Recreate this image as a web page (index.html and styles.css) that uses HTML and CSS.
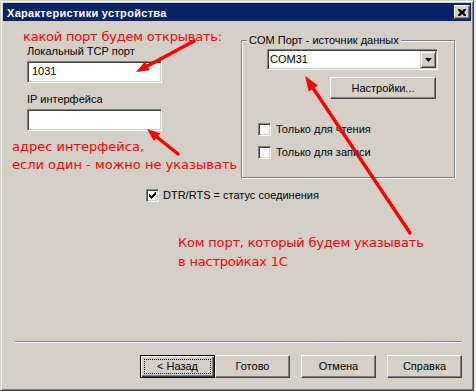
FILE: index.html
```html
<!DOCTYPE html>
<html lang="ru">
<head>
    <meta charset="UTF-8">
    <title>Характеристики устройства</title>
    <link rel="stylesheet" href="styles.css">
</head>
<body>
    <div class="window">
        <div class="titlebar">
            <span class="title">Характеристики устройства</span>
            <span class="close raised">
                <svg width="8" height="7" viewBox="0 0 8 7"><path d="M0 0h2l2 2 2-2h2v1l-2 2.5 2 2.5v1h-2l-2-2-2 2h-2v-1l2-2.5-2-2.5z" fill="#000"/></svg>
            </span>
        </div>
        <div class="content">
            <div class="top">
                <div class="left">
                    <div class="note note-port">какой порт будем открывать:</div>
                    <div class="label">Локальный TCP порт</div>
                    <div class="edit">1031</div>
                    <div class="label label-ip">IP интерфейса</div>
                    <div class="edit"></div>
                    <div class="note note-ip">адрес интерфейса,<br>если один - можно не указывать</div>
                </div>
                <div class="group">
                    <div class="legend">COM Порт - источник данных</div>
                    <div class="combo">
                        <span class="combo-text">COM31</span>
                        <span class="combo-btn">
                            <svg width="7" height="4" viewBox="0 0 7 4"><path d="M0 0h7l-3.5 4z" fill="#000"/></svg>
                        </span>
                    </div>
                    <div class="btn btn-settings">Настройки...</div>
                    <div class="check check-read"><span class="box"></span>Только для чтения</div>
                    <div class="check check-write"><span class="box"></span>Только для записи</div>
                </div>
            </div>
            <div class="check check-dtr">
                <span class="box">
                    <svg width="7" height="7" viewBox="0 0 7 7"><path d="M6 0h1v3h-1v1h-1v1h-1v1h-1v1h-1v-1h-1v-1h-1v-3h1v1h1v1h1v-1h1v-1h1z" fill="#000"/></svg>
                </span>DTR/RTS = статус соединения
            </div>
            <div class="note note-com">Ком порт, который будем указывать<br>в настройках 1С</div>
            <div class="separator"></div>
            <div class="buttons">
                <div class="btn btn-default"><span class="focus">&lt; Назад</span></div>
                <div class="btn">Готово</div>
                <div class="btn btn-gap">Отмена</div>
                <div class="btn btn-gap">Справка</div>
            </div>
        </div>
        <svg class="arrows" width="474" height="391" viewBox="0 0 474 391">
            <g stroke="#f00" stroke-width="3.4" stroke-linecap="round">
                <line x1="193" y1="40" x2="146.5" y2="64.9"/>
                <line x1="177" y1="153" x2="156.1" y2="136.2"/>
                <line x1="409" y1="232" x2="312.3" y2="87.5"/>
            </g>
            <g fill="#f00">
                <polygon points="135,71 148.8,69.3 144.1,60.5"/>
                <polygon points="146,128 153,140.1 159.2,132.3"/>
                <polygon points="304,75 307.8,90.5 316.9,84.4"/>
            </g>
        </svg>
    </div>
</body>
</html>
```

FILE: styles.css
```css
body { margin: 0; background: #eceae6; font-family: "Liberation Sans", Arial, sans-serif; font-size: 11px; line-height: 13px; color: #000; }

.window { position: relative; width: 474px; height: 391px; box-sizing: border-box; display: flex; flex-direction: column; padding: 2px; background: #d4d0c8; border: 1px solid; border-color: #d4d0c8 #404040 #404040 #d4d0c8; box-shadow: inset 1px 1px #fff, inset -1px -1px #808080; }

.titlebar { flex: none; height: 18px; display: flex; justify-content: space-between; align-items: flex-start; background: #0a246a; }
.title { padding: 4px 0 0 4px; color: #fff; font-weight: bold; letter-spacing: 0.3px; }
.close { width: 16px; height: 14px; margin: 2px 1px 0 0; display: flex; align-items: center; justify-content: center; }

.raised { box-sizing: border-box; background: #d4d0c8; border: 1px solid; border-color: #fff #404040 #404040 #fff; box-shadow: inset -1px -1px #808080; }

.content { flex: 1; display: flex; flex-direction: column; padding-bottom: 10px; }
.top { display: flex; align-items: flex-start; }
.left { flex: none; width: 238px; }

.note { color: #f00; font-family: "DejaVu Sans", sans-serif; font-size: 13px; white-space: nowrap; }
.note-port { margin: 8px 0 0 20px; line-height: 16px; letter-spacing: -0.2px; }
.note-ip { margin: 7px 0 0 9px; line-height: 18px; }
.note-com { margin: 31px 0 0 175px; line-height: 19px; letter-spacing: -0.2px; }

.label { margin-left: 24px; }
.label-ip { margin-top: 10px; }
.edit { width: 135px; height: 22px; margin: 3px 0 0 24px; padding: 0 4px; line-height: 18px; background: #fff; box-sizing: border-box; border: 1px solid; border-color: #808080 #fff #fff #808080; box-shadow: inset 1px 1px #404040, inset -1px -1px #d4d0c8; }

.group { width: 214px; margin-top: 19px; padding-bottom: 18px; box-sizing: border-box; border: 1px solid #808080; box-shadow: inset 1px 1px #fff, 1px 1px #fff; }
.legend { display: table; margin: -7px 0 0 5px; padding: 0 2px; background: #d4d0c8; }

.combo { width: 171px; height: 21px; margin: 2px 0 0 25px; display: flex; background: #fff; box-sizing: border-box; border: 1px solid; border-color: #808080 #fff #fff #808080; box-shadow: inset 1px 1px #404040, inset -1px -1px #d4d0c8; padding: 1px; }
.combo-text { flex: 1; padding-left: 1px; line-height: 17px; }
.combo-btn { width: 16px; height: 17px; display: flex; align-items: center; justify-content: center; box-sizing: border-box; background: #d4d0c8; border: 1px solid; border-color: #d4d0c8 #404040 #404040 #d4d0c8; box-shadow: inset 1px 1px #fff, inset -1px -1px #808080; }

.btn { width: 75px; height: 23px; display: flex; align-items: center; justify-content: center; box-sizing: border-box; background: #d4d0c8; border: 1px solid; border-color: #fff #404040 #404040 #fff; box-shadow: inset -1px -1px #808080; }
.btn-settings { width: 106px; height: 22px; margin: 7px 0 0 88px; }
.btn-default { border-color: #000; box-shadow: inset 1px 1px #fff, inset -1px -1px #404040, inset -2px -2px #808080; align-items: stretch; }
.focus { flex: 1; margin: 3px; display: flex; align-items: center; justify-content: center; border: 1px dotted #000; }
.btn-gap { margin-left: 11px; }

.check { display: flex; align-items: flex-start; gap: 5px; }
.check-read { margin: 24px 0 0 16px; }
.check-write { margin: 10px 0 0 16px; }
.check-dtr { margin: 11px 0 0 143px; gap: 4px; }
.box { width: 13px; height: 13px; flex: none; display: flex; align-items: center; justify-content: center; background: #fff; box-sizing: border-box; border: 1px solid; border-color: #808080 #fff #fff #808080; box-shadow: inset 1px 1px #404040, inset -1px -1px #d4d0c8; }

.separator { margin: auto 9px 12px 12px; border-top: 1px solid #808080; border-bottom: 1px solid #fff; }
.buttons { display: flex; justify-content: flex-end; padding-right: 9px; }

.arrows { position: absolute; left: 0; top: 0; pointer-events: none; }
```
